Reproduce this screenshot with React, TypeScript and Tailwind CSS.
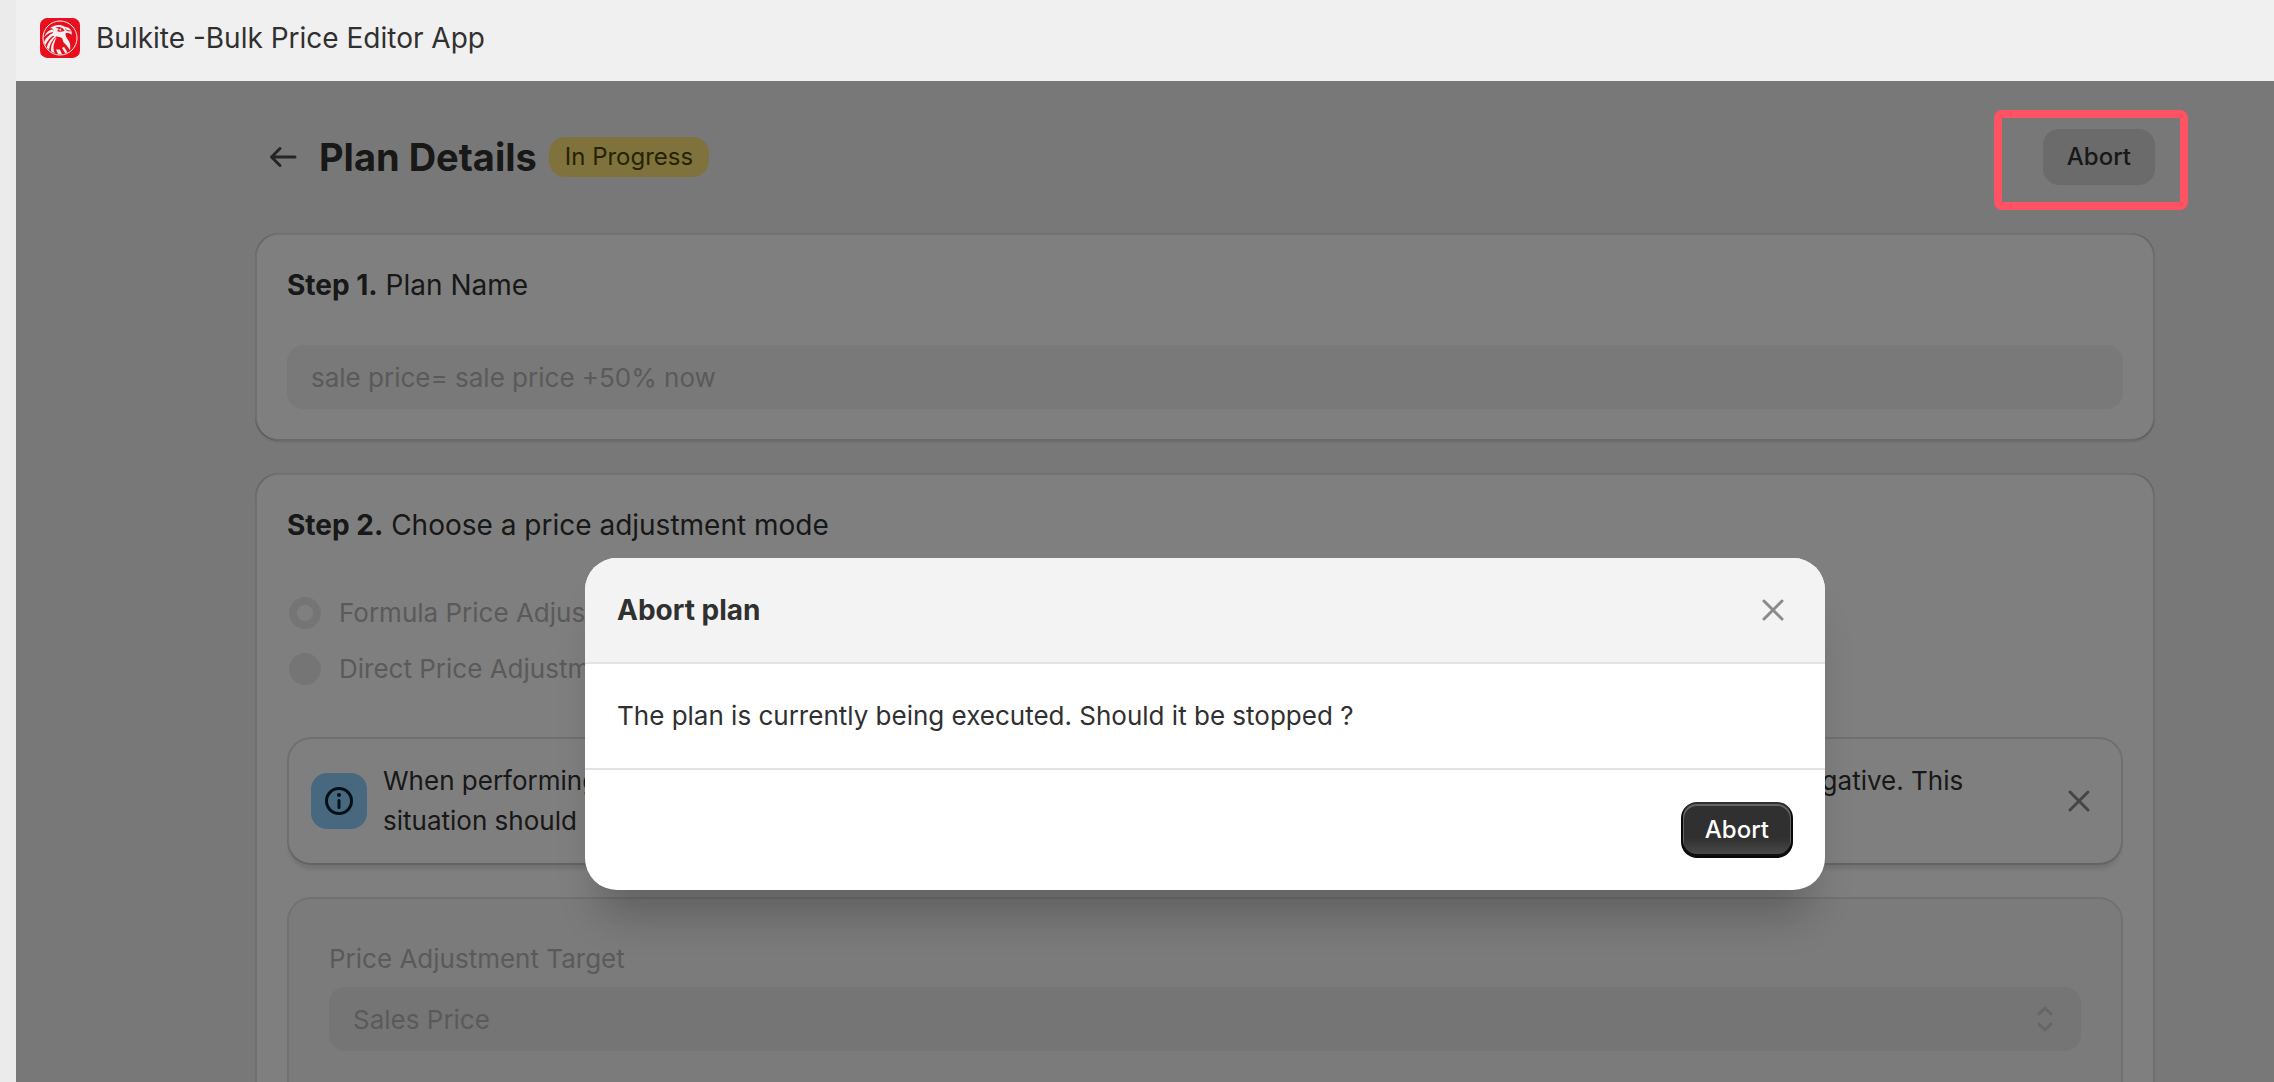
import { useState, type ReactNode } from 'react';

function Logo() {
  return (
    <svg viewBox="0 0 120 120" className="size-10 shrink-0" aria-hidden="true">
      <rect width="120" height="120" rx="22" fill="#e8101e" />
      <circle cx="60" cy="60" r="51" fill="none" stroke="#fbeeee" strokeWidth="3" />
      <g fill="#f4f1f1">
        <path d="M30 31 C40 21 60 17 74 26 C86 27 98 34 95 51 C91 45 84 44 77 45 C75 51 79 59 85 67 C91 76 92 86 90 97 C84 86 76 78 70 72 L66 60 C58 56 50 54 42 57 C38 50 36 44 42 36 C38 32 35 31 30 31 Z" />
        <path d="M42 34 C30 34 18 42 12 58 C20 48 30 43 41 41 Z" />
        <path d="M42 44 C30 48 18 58 12 72 L16 82 C22 68 32 56 44 50 Z" />
        <path d="M46 53 C34 60 24 72 20 88 L27 96 C29 80 36 66 48 57 Z" />
        <path d="M48 59 C38 68 32 84 33 100 L44 106 C38 90 40 74 50 64 Z" />
        <path d="M66 90 L76 106 L82 103 L72 86 Z" />
        <path d="M49 94 C49 99 51 104 55 108 L66 109 L60 95 Z" />
      </g>
      <path d="M46 29 C54 25 62 27 68 31 L74 38 C66 42 56 43 51 38 L57 33 C53 31 50 30 46 29 Z" fill="#e8101e" />
      <circle cx="61" cy="35" r="3" fill="#f4f1f1" />
      <path d="M76 33 C81 38 86 39 92 39" fill="none" stroke="#e8101e" strokeWidth="3" />
      <path d="M64 66 C60 61 48 62 48 69 C48 77 64 73 64 82 C64 89 50 90 46 84 M56 58 V93" fill="none" stroke="#e8101e" strokeWidth="5" />
    </svg>
  );
}

function CloseIcon() {
  return (
    <svg viewBox="0 0 40 40" className="size-10" fill="none" stroke="currentColor" strokeWidth="3" strokeLinecap="round" aria-hidden="true">
      <path d="M11 11 29 29M29 11 11 29" />
    </svg>
  );
}

function Card({ children }: { children: ReactNode }) {
  return (
    <section className="flex flex-col gap-10 rounded-3xl bg-white p-8 shadow-[0_2px_0_rgba(26,26,26,0.07),inset_2px_0_0_rgba(0,0,0,0.13),inset_-2px_0_0_rgba(0,0,0,0.13),inset_0_-2px_0_rgba(0,0,0,0.17),inset_0_2px_0_rgba(0,0,0,0.1)]">
      {children}
    </section>
  );
}

function StepTitle({ step, children }: { step: string; children: ReactNode }) {
  return (
    <h2 className="text-[28px] leading-10">
      <strong className="font-[650]">{step}</strong> {children}
    </h2>
  );
}

function ModeOption({ id, label, checked = false }: { id: string; label: string; checked?: boolean }) {
  return (
    <div className="flex items-center gap-[18px] py-2 pl-0.5">
      <input
        type="radio"
        id={id}
        name="mode"
        disabled
        defaultChecked={checked}
        className="size-8 appearance-none rounded-full bg-[#ebebeb] checked:border-8 checked:border-[#ebebeb] checked:bg-white"
      />
      <label htmlFor={id} className="leading-10 text-[#b5b5b5]">{label}</label>
    </div>
  );
}

export default function App() {
  const [open, setOpen] = useState(true);

  return (
    <div className="flex h-screen overflow-hidden bg-[#ebebeb] pl-4 font-['Inter',sans-serif] text-[26px] text-[#303030]">
      <div className="flex min-w-0 flex-1 flex-col">
        <header className="flex h-[81px] shrink-0 items-center gap-4 bg-[#f0f0f0] px-6 pb-1.5">
          <Logo />
          <span className="text-[28px] leading-10">Bulkite -Bulk Price Editor App</span>
        </header>

        <div className="relative min-h-0 flex-1 overflow-hidden bg-[#f1f1f1]">
          <main className="flex flex-col gap-8 pt-12 pr-[119px] pl-[239px]">
            <div className="mb-4 flex items-center">
              <button type="button" aria-label="Back" className="flex size-14 items-center justify-center text-[#4a4a4a]">
                <svg viewBox="0 0 40 40" className="size-10" fill="none" stroke="currentColor" strokeWidth="3" strokeLinecap="round" strokeLinejoin="round" aria-hidden="true">
                  <path d="M32 20H8.500M17 11.500 8.500 20 17 28.500" />
                </svg>
              </button>
              <h1 className="ml-2 text-[38px] leading-12 font-[650]">Plan Details</h1>
              <span className="ml-3 rounded-2xl bg-[#ffe478] px-4 text-[24px] leading-10 text-[#4f4700]">In Progress</span>
              <button type="button" onClick={() => setOpen(true)} className="ml-auto h-14 rounded-2xl bg-[#d6d6d6] px-6 text-[24px] font-[550]">
                Abort
              </button>
            </div>

            <Card>
              <StepTitle step="Step 1.">Plan Name</StepTitle>
              <input
                type="text"
                aria-label="Plan Name"
                disabled
                defaultValue="sale price= sale price +50% now"
                className="h-16 w-full rounded-2xl bg-[#f2f2f2] px-6 text-[#b5b5b5]"
              />
            </Card>

            <Card>
              <StepTitle step="Step 2.">Choose a price adjustment mode</StepTitle>
              <div role="radiogroup" aria-label="Price adjustment mode">
                <ModeOption id="mode-formula" label="Formula Price Adjustment" checked />
                <ModeOption id="mode-direct" label="Direct Price Adjustment" />
              </div>

              <div className="flex flex-col gap-8">
                <div className="flex items-center gap-4 rounded-3xl p-6 shadow-[0_6px_4px_-2px_rgba(26,26,26,0.12),inset_0_0_0_2px_rgba(0,0,0,0.13),inset_0_-2px_0_rgba(0,0,0,0.1)]">
                  <div className="flex size-14 shrink-0 items-center justify-center rounded-2xl bg-[#91d0ff] text-[#00202f]">
                    <svg viewBox="0 0 40 40" className="size-10" fill="none" stroke="currentColor" strokeWidth="3" strokeLinecap="round" aria-hidden="true">
                      <circle cx="20" cy="20" r="12.500" />
                      <path d="M20 19.500V26.500" />
                      <circle cx="20" cy="14" r="2" fill="currentColor" stroke="none" />
                    </svg>
                  </div>
                  <p className="flex-1 leading-10">
                    When performing a formula price adjustment, the final calculated result of each product variant may turn out to be negative. This
                    <br />
                    situation should be avoided where possible.
                  </p>
                  <button type="button" aria-label="Dismiss" className="text-[#8a8a8a]">
                    <CloseIcon />
                  </button>
                </div>

                <div className="flex flex-col gap-2 rounded-3xl border-2 border-[#e3e3e3] bg-[#f7f7f7] p-10 pb-20">
                  <label htmlFor="target" className="leading-10 text-[#b5b5b5]">Price Adjustment Target</label>
                  <div className="relative">
                    <select id="target" disabled className="h-16 w-full appearance-none rounded-2xl bg-[#ebebeb] px-6 text-[#b5b5b5] opacity-100">
                      <option>Sales Price</option>
                    </select>
                    <svg viewBox="0 0 40 40" className="pointer-events-none absolute top-3 right-4 size-10 text-[#cccccc]" fill="none" stroke="currentColor" strokeWidth="3" strokeLinecap="round" strokeLinejoin="round" aria-hidden="true">
                      <path d="M14 15 20 9 26 15M14 25 20 31 26 25" />
                    </svg>
                  </div>
                </div>
              </div>
            </Card>
          </main>

          {open && (
            <div className="absolute inset-0 flex items-start justify-center bg-black/50 pt-[477px] pl-[120px]">
              <div
                role="dialog"
                aria-modal="true"
                aria-labelledby="dialog-title"
                className="w-[1240px] overflow-hidden rounded-[32px] bg-white shadow-[0_40px_40px_-16px_rgba(26,26,26,0.28)]"
              >
                <div className="flex items-center justify-between border-b-2 border-[#e3e3e3] bg-[#f3f3f3] p-8">
                  <h2 id="dialog-title" className="text-[28px] leading-10 font-[650]">Abort plan</h2>
                  <button type="button" aria-label="Close" onClick={() => setOpen(false)} className="text-[#8a8a8a]">
                    <CloseIcon />
                  </button>
                </div>
                <p className="border-b-2 border-[#e3e3e3] p-8 leading-10">
                  The plan is currently being executed. Should it be stopped ?
                </p>
                <div className="flex justify-end p-8">
                  <button
                    type="button"
                    onClick={() => setOpen(false)}
                    className="h-14 rounded-2xl bg-[#303030] bg-linear-to-b from-transparent from-64% to-white/15 px-6 text-[24px] font-[550] text-white shadow-[inset_0_-2px_0_2px_rgba(0,0,0,0.8),inset_0_0_0_2px_#303030,inset_0_1px_0_3px_rgba(255,255,255,0.25)]"
                  >
                    Abort
                  </button>
                </div>
              </div>
            </div>
          )}

          <div className="pointer-events-none absolute top-[29px] right-[86px] h-[100px] w-[194px] rounded-lg border-8 border-[#ff5263]" />
        </div>
      </div>
    </div>
  );
}
